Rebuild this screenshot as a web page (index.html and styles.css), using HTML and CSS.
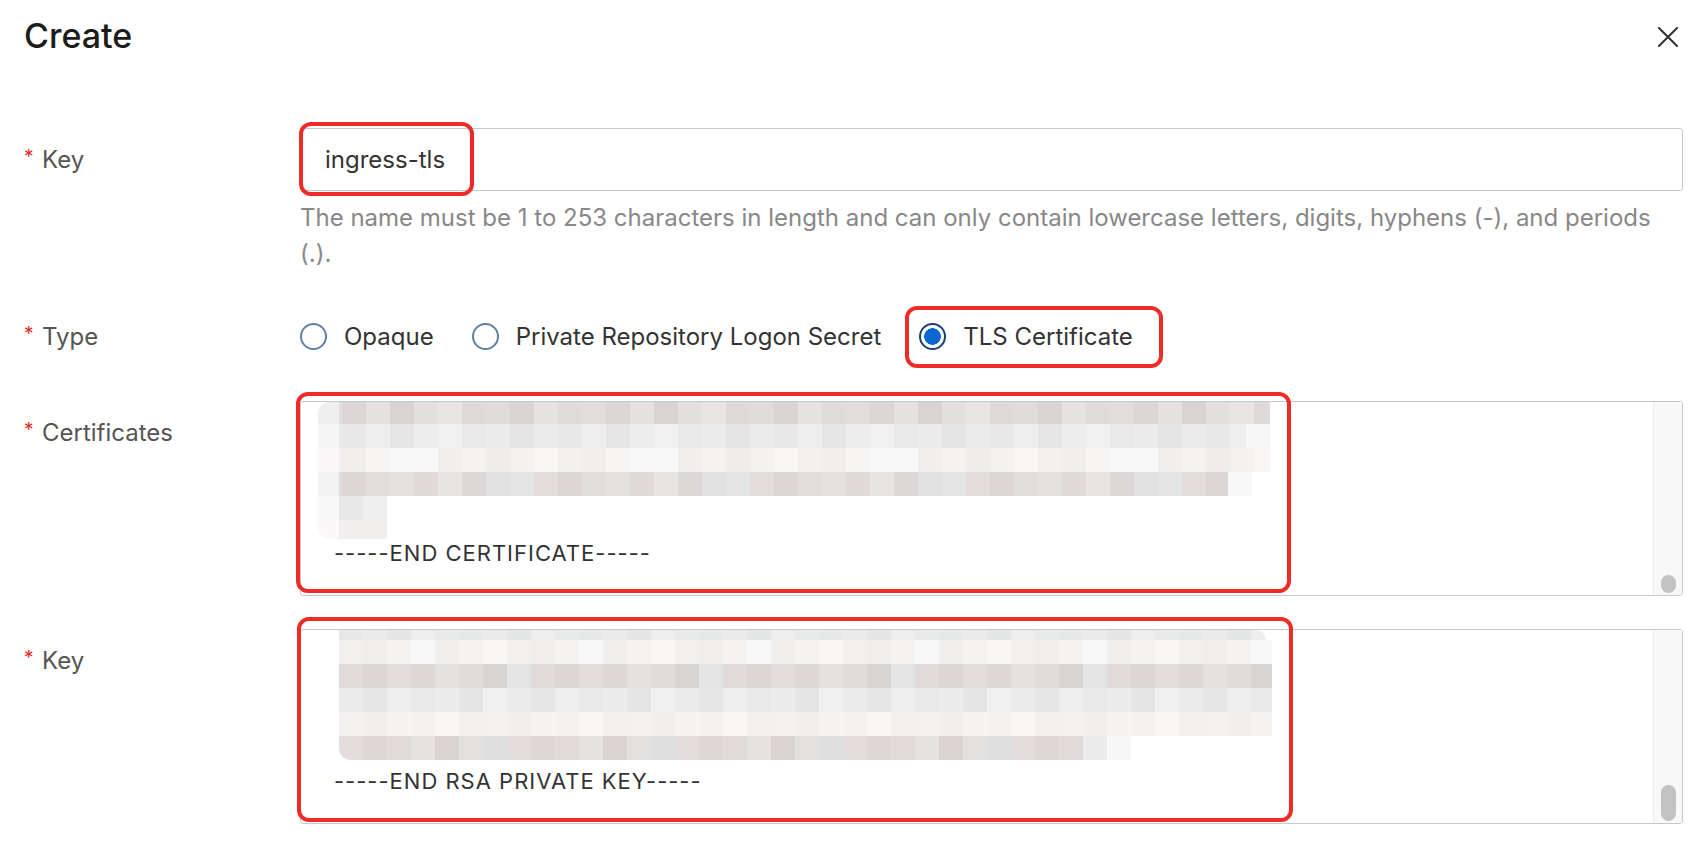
FILE: index.html
```html
<!DOCTYPE html>
<html lang="en">
<head>
<meta charset="utf-8">
<title>Create</title>
<link rel="stylesheet" href="styles.css">
</head>
<body>
<div class="dialog">
  <header class="dialog-header">
    <h1 class="dialog-title">Create</h1>
    <button class="close-btn" type="button" aria-label="Close">
      <svg width="20" height="20" viewBox="0 0 20 20"><path d="M1 1 L19 19 M19 1 L1 19" stroke="#333" stroke-width="2" fill="none" stroke-linecap="square"/></svg>
    </button>
  </header>

  <form class="form">
    <div class="form-item">
      <label class="form-label"><span class="req">*</span>Key</label>
      <div class="form-control">
        <div class="field">
          <input class="input" type="text" value="ingress-tls">
          <span class="mark mark-input"></span>
        </div>
        <div class="help">The name must be 1 to 253 characters in length and can only contain lowercase letters, digits, hyphens (-), and periods (.).</div>
      </div>
    </div>

    <div class="form-item">
      <label class="form-label"><span class="req">*</span>Type</label>
      <div class="form-control radio-group">
        <span class="radio"><span class="radio-dot"></span>Opaque</span>
        <span class="radio"><span class="radio-dot"></span>Private Repository Logon Secret</span>
        <span class="radio radio-checked"><span class="radio-dot"></span>TLS Certificate<span class="mark mark-radio"></span></span>
      </div>
    </div>

    <div class="form-item">
      <label class="form-label"><span class="req">*</span>Certificates</label>
      <div class="form-control">
        <div class="textarea">
          <div class="ta-content">
            <div class="mosaic mosaic-cert">
              <div class="mrow h22 w-full cr1 tl"></div>
              <div class="mrow h24 w-full cr2"></div>
              <div class="mrow h24 w-full cr3"></div>
              <div class="mrow h24 w-cr4 cr4"></div>
              <div class="mrow h24 w-short cr5"></div>
              <div class="mrow h19 w-short cr6 bl"></div>
            </div>
            <div class="ta-line cert-end">-----END CERTIFICATE-----</div>
          </div>
          <div class="scroll-track"><span class="thumb thumb-cert"></span></div>
          <span class="mark mark-cert"></span>
        </div>
      </div>
    </div>

    <div class="form-item">
      <label class="form-label"><span class="req">*</span>Key</label>
      <div class="form-control">
        <div class="textarea">
          <div class="ta-content">
            <div class="mosaic mosaic-key">
              <div class="mrow h10 w-k0 kr0 tr"></div>
              <div class="mrow h24 w-kfull kr1"></div>
              <div class="mrow h24 w-kfull kr2"></div>
              <div class="mrow h24 w-kfull kr3"></div>
              <div class="mrow h24 w-kfull kr4"></div>
              <div class="mrow h24 w-k5 kr5 bl"></div>
            </div>
            <div class="ta-line key-end">-----END RSA PRIVATE KEY-----</div>
          </div>
          <div class="scroll-track"><span class="thumb thumb-key"></span></div>
          <span class="mark mark-key"></span>
        </div>
      </div>
    </div>
  </form>
</div>
</body>
</html>
```

FILE: styles.css
```css
* { box-sizing: border-box; margin: 0; padding: 0; }

html, body {
  background: #ffffff;
}

body {
  width: 1704px;
  height: 846px;
  overflow: hidden;
  font-family: Inter, "Noto Sans", "Liberation Sans", sans-serif;
  color: #333333;
}

.dialog {
  padding: 16px 21px 0 24px;
}

.dialog-header {
  display: flex;
  justify-content: space-between;
  align-items: flex-start;
  height: 112px;
}

.dialog-title {
  font-size: 34px;
  line-height: 40px;
  font-weight: 500;
  color: #1c1c1c;
}

.close-btn {
  width: 20px;
  height: 20px;
  margin-top: 11px;
  margin-right: 5px;
  border: 0;
  background: none;
  display: block;
}

.close-btn svg { display: block; }

.form-item {
  display: grid;
  grid-template-columns: 276px 1fr;
  margin-bottom: 33px;
}

.form-label {
  padding-top: 14px;
  font-size: 24px;
  line-height: 36px;
  color: #555555;
}

.req {
  display: inline-block;
  width: 18px;
  font-size: 19px;
  line-height: 19px;
  vertical-align: 5px;
  color: #e0281f;
}

.form-control {
  position: relative;
}

.field {
  position: relative;
}

.input {
  display: block;
  width: 100%;
  height: 63px;
  padding: 0 24px;
  border: 1px solid #c5c9d0;
  border-radius: 3px;
  font-family: inherit;
  font-size: 24px;
  color: #333333;
  background: #ffffff;
  outline: none;
}

.help {
  margin-top: 9px;
  font-size: 24px;
  line-height: 36px;
  color: #888888;
}

/* radios */
.radio-group {
  display: flex;
  align-items: center;
  gap: 38px;
  height: 63px;
}

.radio {
  position: relative;
  display: inline-flex;
  align-items: center;
  gap: 17px;
  font-size: 24px;
  line-height: 36px;
  color: #333333;
}

.radio-dot {
  width: 27px;
  height: 27px;
  border: 2px solid #5f80a6;
  border-radius: 50%;
  background: #ffffff;
}

.radio-checked .radio-dot {
  border-color: #1a3f75;
  background: radial-gradient(circle, #0b66d2 0 8px, #ffffff 8.6px);
}

/* textarea */
.textarea {
  position: relative;
  display: flex;
  height: 195px;
  border: 1px solid #c5c9d0;
  border-radius: 3px;
  background: #ffffff;
}

.ta-content {
  flex: 1;
  padding-left: 33px;
  overflow: hidden;
}

.ta-line {
  font-size: 22px;
  line-height: 24px;
  letter-spacing: 1px;
  color: #333333;
  white-space: pre;
}

.cert-end { margin-top: 2px; }
.key-end { margin-top: 9px; }

.mosaic-cert { margin-left: -16px; }
.mosaic-key { margin-left: 5px; }

.mrow { background-color: #eeeeee; }
.h10 { height: 10px; }
.h19 { height: 19px; }
.h22 { height: 22px; }
.h24 { height: 24px; }

.w-full { width: 952px; }
.w-cr4 { width: 934px; }
.w-short { width: 69px; }
.w-k0 { width: 927px; }
.w-kfull { width: 933px; }
.w-k5 { width: 792px; }

.tl { border-top-left-radius: 12px; }
.bl { border-bottom-left-radius: 12px; }
.tr { border-top-right-radius: 10px; }

/* certificate mosaic rows */
.cr1 {
  background:
    linear-gradient(90deg, #efefef 0 21px, transparent 21px),
    repeating-linear-gradient(90deg, #e2dcdc 0 24px, #dcd6d6 24px 48px, #e6e1e1 48px 72px, #d8d2d2 72px 96px, #e4dfdf 96px 120px, #e9e5e5 120px 144px, #dfd9d9 144px 168px, #e1dcdc 168px 192px, #dad4d4 192px 216px, #e7e2e2 216px 240px, #e0dbdb 240px 264px);
}
.cr2 {
  background:
    linear-gradient(90deg, #f5f5f5 0 21px, transparent 21px),
    linear-gradient(90deg, transparent calc(100% - 24px), #f7f7f7 0),
    repeating-linear-gradient(90deg, #ebebeb 0 24px, #e8e8e8 24px 48px, #eeeeee 48px 72px, #e6e6e6 72px 96px, #ededed 96px 120px, #f1f1f1 120px 144px, #e9e9e9 144px 168px, #ececec 168px 192px, #e5e5e5 192px 216px);
}
.cr3 {
  background:
    linear-gradient(90deg, #faf8f8 0 21px, transparent 21px),
    repeating-linear-gradient(90deg, #f4efef 0 24px, #f2eded 24px 48px, #f7f4f4 48px 72px, #f9f9f9 72px 96px, #f8f8f8 96px 120px, #f3eeee 120px 144px, #f6f2f2 144px 168px, #f1ecec 168px 192px, #f5f1f1 192px 216px, #f9f6f5 216px 240px);
}
.cr4 {
  background:
    linear-gradient(90deg, #f3f3f3 0 21px, transparent 21px),
    linear-gradient(90deg, transparent calc(100% - 24px), #f8f8f8 0),
    repeating-linear-gradient(90deg, #e3dddd 0 24px, #dcd6d6 24px 48px, #e2dddd 48px 72px, #e5e0e0 72px 96px, #dfd9d9 96px 120px, #e8e4e4 120px 144px, #ddd8d8 144px 168px, #e1e1e1 168px 192px, #e4e4e4 192px 216px);
}
.cr5 {
  background: linear-gradient(90deg, #f9f9f9 0 21px, #e8e8e9 21px 45px, #efefef 45px);
}
.cr6 {
  background: linear-gradient(90deg, #faf8f8 0 21px, #f3eeee 21px);
}

/* key mosaic rows */
.kr0 {
  background: repeating-linear-gradient(90deg, #e7e8e8 0 24px, #ebebeb 24px 48px, #e4e5e5 48px 72px, #eeeeee 72px 96px, #e9eaea 96px 120px);
}
.kr1 {
  background: repeating-linear-gradient(90deg, #f4efef 0 24px, #f2eded 24px 48px, #f6f3f3 48px 72px, #f8f8f8 72px 96px, #f1eeee 96px 120px, #f5f2f2 120px 144px, #f9f6f5 144px 168px);
}
.kr2 {
  background: repeating-linear-gradient(90deg, #e0dada 0 24px, #dcd5d5 24px 48px, #e3dddd 48px 72px, #ddd7d7 72px 96px, #e6e1e1 96px 120px, #e1dcdc 120px 144px, #d9d4d4 144px 168px, #e4e4e4 168px 192px);
}
.kr3 {
  background: repeating-linear-gradient(90deg, #ebebeb 0 24px, #e7e7e7 24px 48px, #eeeeee 48px 72px, #e9e9e9 72px 96px, #ececec 96px 120px, #e5e5e5 120px 144px, #f0f0f0 144px 168px);
}
.kr4 {
  background: repeating-linear-gradient(90deg, #f4f0f0 0 24px, #f2eeee 24px 48px, #f7f3f3 48px 72px, #f5f1f1 72px 96px, #f9f6f5 96px 120px, #f3efef 120px 144px);
}
.kr5 {
  background:
    linear-gradient(90deg, transparent calc(100% - 48px), #ececec 0 calc(100% - 24px), #f7f7f7 0),
    repeating-linear-gradient(90deg, #e3dddd 0 24px, #ddd7d7 24px 48px, #e0dada 48px 72px, #e7e2e2 72px 96px, #dad4d4 96px 120px, #e5e0e0 120px 144px, #dfdfdf 144px 168px);
}

/* scrollbar */
.scroll-track {
  width: 29px;
  display: flex;
  flex-direction: column;
  justify-content: flex-end;
  align-items: center;
  padding-bottom: 2px;
  background: #f8f8f8;
  border-left: 1px solid #ebebeb;
}

.thumb {
  display: block;
  width: 15px;
  border-radius: 8px;
  background: #c2c2c2;
}
.thumb-cert { height: 18px; }
.thumb-key { height: 36px; }

/* red annotation outlines */
.mark {
  position: absolute;
  border: 4px solid #ee2b27;
  border-radius: 12px;
  pointer-events: none;
}
.mark-input { left: -1px; top: -6px; width: 175px; height: 74px; }
.mark-radio { left: -14px; top: -13px; width: 258px; height: 62px; }
.mark-cert { left: -5px; top: -10px; width: 995px; height: 201px; }
.mark-key { left: -4px; top: -13px; width: 996px; height: 205px; }
```
